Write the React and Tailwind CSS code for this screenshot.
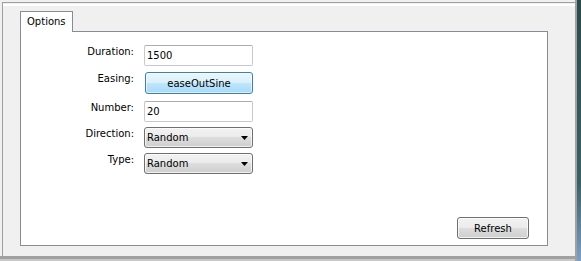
export default function App() {
  const font = "font-['DejaVu_Sans',sans-serif] text-[10px] text-black";
  const grayBtn =
    "border border-[#707070] rounded-[3px] bg-[linear-gradient(#f2f2f2_0%,#ebebeb_50%,#dddddd_50%,#cfcfcf_100%)] shadow-[inset_0_0_0_1px_rgba(255,255,255,0.7)]";
  const input =
    "w-[109px] h-[21px] border border-[#c5cad2] border-t-[#abadb3] rounded-[2px] bg-white flex items-center pl-[2px]";
  const Arrow = () => (
    <svg width="7" height="4" viewBox="0 0 7 4" className="block">
      <polygon points="0,0 7,0 3.5,4" fill="#000" />
    </svg>
  );
  const Label = ({ children }) => (
    <div className="w-[113px] text-right leading-[12px] pt-[1px] shrink-0">{children}</div>
  );
  const Select = ({ value }) => (
    <div className={`w-[109px] h-[21px] ${grayBtn} flex items-center justify-between pl-[2px] pr-[4px]`}>
      <span>{value}</span>
      <Arrow />
    </div>
  );
  return (
    <div className={`w-[581px] h-[261px] flex bg-[#f0f0f0] overflow-hidden ${font}`}>
      <div className="w-[575px] flex flex-col">
        <div className="h-[256px] pt-[2px] pl-[2px]">
          <div className="h-full border-t border-l border-[#a0a0a0] flex flex-col">
            <div className="mt-px h-[2px] bg-white" />
            <div className="pl-[17px] pt-[5px] flex flex-col">
              <div className="relative z-10 -mb-px w-[53px] h-[21px] border border-b-0 border-[#898c95] bg-white pl-[6px] pt-[4px] leading-[12px]">
                Options
              </div>
              <div className="w-[528px] h-[215px] border border-[#898c95] bg-white flex flex-col">
                <div className="pt-[13px] flex flex-col">
                  <div className="flex gap-[10px] h-[21px] mb-[6px]">
                    <Label>Duration:</Label>
                    <div className={input}>1500</div>
                  </div>
                  <div className="flex gap-[10px] h-[22px] mb-[7px]">
                    <Label>Easing:</Label>
                    <div className="w-[108px] h-[22px] ml-px border border-[#3c7fb1] rounded-[3px] bg-[linear-gradient(#eaf6fd_0%,#d9f0fc_50%,#bee6fd_50%,#a7d9f5_100%)] shadow-[inset_0_0_0_1px_rgba(255,255,255,0.6)] flex items-center justify-center">
                      easeOutSine
                    </div>
                  </div>
                  <div className="flex gap-[10px] h-[21px] mb-[5px]">
                    <Label>Number:</Label>
                    <div className={input}>20</div>
                  </div>
                  <div className="flex gap-[10px] h-[21px] mb-[5px]">
                    <Label>Direction:</Label>
                    <Select value="Random" />
                  </div>
                  <div className="flex gap-[10px] h-[21px]">
                    <Label>Type:</Label>
                    <Select value="Random" />
                  </div>
                </div>
                <div className="mt-auto flex justify-end pr-[18px] pb-[6px]">
                  <div className={`w-[72px] h-[22px] ${grayBtn} flex items-center justify-center`}>
                    Refresh
                  </div>
                </div>
              </div>
            </div>
          </div>
        </div>
        <div className="h-[3px] bg-[#a0a0a0]" />
        <div className="h-[2px] bg-[#c8c8c8]" />
      </div>
      <div className="w-[2px] bg-[#a0a0a0]" />
      <div className="w-[4px] bg-[linear-gradient(#2c4a4c_0%,#3a6066_70%,#7aa0c8_100%)]" />
    </div>
  );
}
